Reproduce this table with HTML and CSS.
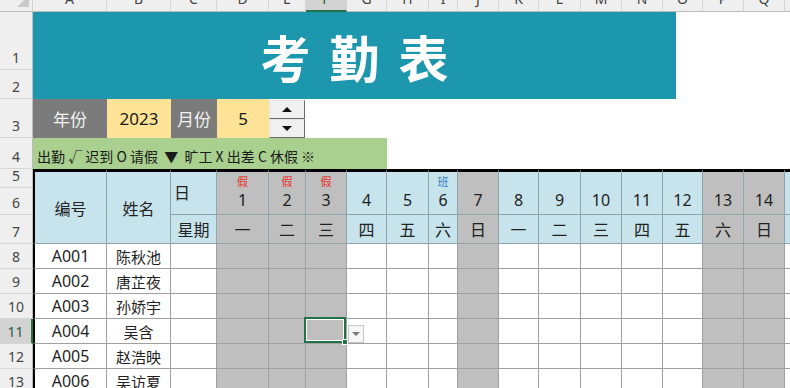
FILE: index.html
```html
<!DOCTYPE html>
<html lang="zh">
<head>
<meta charset="utf-8">
<title>考勤表</title>
<link rel="stylesheet" href="styles.css">
</head>
<body>
<div class="sheet">
  <div class="corner"></div>
  <div class="ch">A</div><div class="ch">B</div><div class="ch">C</div><div class="ch">D</div><div class="ch">E</div><div class="ch sel">F</div><div class="ch">G</div><div class="ch">H</div><div class="ch">I</div><div class="ch">J</div><div class="ch">K</div><div class="ch">L</div><div class="ch">M</div><div class="ch">N</div><div class="ch">O</div><div class="ch">P</div><div class="ch">Q</div><div class="ch">R</div>

  <div class="rh">1</div>
  <div class="title">考勤表</div>
  <div class="blank blank-top"></div>
  <div class="rh">2</div>

  <div class="rh">3</div>
  <div class="lab">年份</div>
  <div class="val">2023</div>
  <div class="lab">月份</div>
  <div class="val">5</div>
  <div class="spin"><div class="spin-btn"><span class="tri-up"></span></div><div class="spin-btn"><span class="tri-down"></span></div></div>
  <div class="blank blank-r3"></div>

  <div class="rh">4</div>
  <div class="legend">出勤 √ 迟到 O 请假  ▼  旷工 X 出差 C 休假 ※</div>
  <div class="blank blank-r4"></div>

  <div class="rh">5</div>
  <div class="th top first hd">编号</div>
  <div class="th top hd">姓名</div>
  <div class="th top ri">日</div>
  <div class="th top day off"><span class="tag">假</span><span class="num">1</span></div>
  <div class="th top day off"><span class="tag">假</span><span class="num">2</span></div>
  <div class="th top day off"><span class="tag">假</span><span class="num">3</span></div>
  <div class="th top day"><span class="num">4</span></div>
  <div class="th top day"><span class="num">5</span></div>
  <div class="th top day"><span class="tag work">班</span><span class="num">6</span></div>
  <div class="th top day off"><span class="num">7</span></div>
  <div class="th top day"><span class="num">8</span></div>
  <div class="th top day"><span class="num">9</span></div>
  <div class="th top day"><span class="num">10</span></div>
  <div class="th top day"><span class="num">11</span></div>
  <div class="th top day"><span class="num">12</span></div>
  <div class="th top day off"><span class="num">13</span></div>
  <div class="th top day off"><span class="num">14</span></div>
  <div class="th top day"><span class="num">15</span></div>
  <div class="rh">6</div>
  <div class="rh">7</div>
  <div class="th wkl">星期</div>
  <div class="th wk off">一</div><div class="th wk off">二</div><div class="th wk off">三</div><div class="th wk">四</div><div class="th wk">五</div><div class="th wk">六</div><div class="th wk off">日</div><div class="th wk">一</div><div class="th wk">二</div><div class="th wk">三</div><div class="th wk">四</div><div class="th wk">五</div><div class="th wk off">六</div><div class="th wk off">日</div><div class="th wk">一</div>

  <div class="rh">8</div>
  <div class="td first">A001</div><div class="td name">陈秋池</div><div class="td"></div>
  <div class="td off"></div><div class="td off"></div><div class="td off"></div><div class="td"></div><div class="td"></div><div class="td"></div><div class="td off"></div><div class="td"></div><div class="td"></div><div class="td"></div><div class="td"></div><div class="td"></div><div class="td off"></div><div class="td off"></div><div class="td"></div>

  <div class="rh">9</div>
  <div class="td first">A002</div><div class="td name">唐芷夜</div><div class="td"></div>
  <div class="td off"></div><div class="td off"></div><div class="td off"></div><div class="td"></div><div class="td"></div><div class="td"></div><div class="td off"></div><div class="td"></div><div class="td"></div><div class="td"></div><div class="td"></div><div class="td"></div><div class="td off"></div><div class="td off"></div><div class="td"></div>

  <div class="rh">10</div>
  <div class="td first">A003</div><div class="td name">孙娇宇</div><div class="td"></div>
  <div class="td off"></div><div class="td off"></div><div class="td off"></div><div class="td"></div><div class="td"></div><div class="td"></div><div class="td off"></div><div class="td"></div><div class="td"></div><div class="td"></div><div class="td"></div><div class="td"></div><div class="td off"></div><div class="td off"></div><div class="td"></div>

  <div class="rh sel">11</div>
  <div class="td first">A004</div><div class="td name">吴含</div><div class="td"></div>
  <div class="td off"></div><div class="td off"></div><div class="td off cur"><div class="selbox"><span class="handle"></span></div><div class="dd"><span class="dd-tri"></span></div></div><div class="td"></div><div class="td"></div><div class="td"></div><div class="td off"></div><div class="td"></div><div class="td"></div><div class="td"></div><div class="td"></div><div class="td"></div><div class="td off"></div><div class="td off"></div><div class="td"></div>

  <div class="rh">12</div>
  <div class="td first">A005</div><div class="td name">赵浩映</div><div class="td"></div>
  <div class="td off"></div><div class="td off"></div><div class="td off"></div><div class="td"></div><div class="td"></div><div class="td"></div><div class="td off"></div><div class="td"></div><div class="td"></div><div class="td"></div><div class="td"></div><div class="td"></div><div class="td off"></div><div class="td off"></div><div class="td"></div>

  <div class="rh">13</div>
  <div class="td first">A006</div><div class="td name">吴访夏</div><div class="td"></div>
  <div class="td off"></div><div class="td off"></div><div class="td off"></div><div class="td"></div><div class="td"></div><div class="td"></div><div class="td off"></div><div class="td"></div><div class="td"></div><div class="td"></div><div class="td"></div><div class="td"></div><div class="td off"></div><div class="td off"></div><div class="td"></div>
</div>
</body>
</html>
```

FILE: styles.css
```css
* { box-sizing: border-box; margin: 0; padding: 0; }
html, body { width: 790px; height: 388px; overflow: hidden; background: #fff; }
body { font-family: "Noto Sans", "Noto Sans CJK SC", sans-serif; color: #1f1f1f; }

.sheet {
  display: grid;
  width: 826px;
  grid-template-columns: 33px 74px 64px 46px 52px 37px 41px 40px 42px 29px 41px 40px 42px 41px 41px 40px 41px 41px 41px;
  grid-template-rows: 12px 58px 29px 39px 31px 19px 27px 29px repeat(6, 25px);
}
.sheet > div { overflow: hidden; min-width: 0; }

.corner {
  position: relative;
  background: #efefef;
  border-right: 1px solid #cfcfcf;
  border-bottom: 1px solid #bdbdbd;
}
.corner::after {
  content: "";
  position: absolute;
  right: 3px;
  bottom: 4px;
  border-left: 12px solid transparent;
  border-bottom: 12px solid #c9c9c9;
}

.ch {
  display: flex;
  align-items: flex-end;
  justify-content: center;
  background: #efefef;
  border-right: 1px solid #d5d5d5;
  border-bottom: 1px solid #bdbdbd;
  padding-bottom: 5px;
  font-size: 14px;
  line-height: 14px;
  color: #444;
}
.ch.sel { background: #d3d3d3; border-bottom: 2px solid #217346; padding-bottom: 4px; color: #1e5e3a; }

.rh {
  display: flex;
  align-items: flex-end;
  justify-content: center;
  background: #efefef;
  border-right: 1px solid #bdbdbd;
  border-bottom: 1px solid #d5d5d5;
  padding-bottom: 4px;
  font-size: 14px;
  line-height: 14px;
  color: #444;
}
.rh.sel { background: #d3d3d3; border-right: 2px solid #217346; color: #1e5e3a; }

.title {
  grid-column: span 15;
  grid-row: span 2;
  margin-right: 27px;
  display: flex;
  align-items: center;
  justify-content: center;
  background: #1c97ae;
  color: #fff;
  font-family: "Noto Sans CJK SC", sans-serif;
  font-weight: 700;
  font-size: 50px;
  letter-spacing: 19px;
  padding-left: 19px;
}

.blank-top { grid-column: span 3; grid-row: span 2; }
.blank-r3 { grid-column: span 13; }
.blank-r4 { grid-column: span 11; }

.lab, .val {
  display: flex;
  align-items: center;
  justify-content: center;
  font-size: 17px;
}
.lab { background: #7b7b7b; color: #f2f2f2; font-family: "Noto Sans CJK SC", sans-serif; }
.val { background: #fee397; color: #1a1a1a; }

.spin {
  display: flex;
  flex-direction: column;
  padding: 1px 1px 0 0;
}
.spin-btn {
  flex: 1;
  display: flex;
  align-items: center;
  justify-content: center;
  background: #f0f0f0;
  border: 1px solid;
  border-color: #e6e6e6 #6b6b6b #6b6b6b #e6e6e6;
}
.tri-up { border-left: 5px solid transparent; border-right: 5px solid transparent; border-bottom: 5px solid #111; }
.tri-down { border-left: 5px solid transparent; border-right: 5px solid transparent; border-top: 5px solid #111; }

.legend {
  grid-column: span 7;
  display: flex;
  align-items: center;
  background: #a9d08e;
  padding: 4px 0 0 4px;
  font-family: "Noto Sans CJK SC", sans-serif;
  font-size: 14px;
  white-space: pre;
  color: #1a1a1a;
}

.th {
  display: flex;
  align-items: center;
  justify-content: center;
  background: #c7e4ed;
  border-right: 1px solid #91a4aa;
  border-bottom: 1px solid #91a4aa;
  font-family: "Noto Sans CJK SC", sans-serif;
  font-size: 16px;
  color: #222;
}
.th.off, .td.off { background: #bfbfbf; }
.top { border-top: 3px solid #000; }
.first { border-left: 2px solid #000; }
.hd { grid-row: span 3; }
.ri { grid-row: span 2; justify-content: flex-start; padding: 0 0 3px 3px; }
.day {
  grid-row: span 2;
  flex-direction: column;
  justify-content: flex-end;
  padding-bottom: 4px;
}
.tag { font-size: 11px; line-height: 13px; margin-bottom: 2px; color: #e8302a; }
.tag.work { color: #2f80c8; }
.num { font-family: "Noto Sans", sans-serif; font-size: 16px; line-height: 20px; }
.wk { font-size: 16px; }

.td {
  display: flex;
  align-items: center;
  justify-content: center;
  border-right: 1px solid #a0a0a0;
  border-bottom: 1px solid #a0a0a0;
  font-size: 16px;
  color: #1f1f1f;
}
.name { font-family: "Noto Sans CJK SC", sans-serif; font-size: 15px; }

.sheet > .cur { position: relative; overflow: visible; z-index: 2; }
.selbox {
  position: absolute;
  left: -2px;
  top: -2px;
  right: 0;
  bottom: 0;
  border: 2px solid #217346;
  box-shadow: inset 0 0 0 1px #fff;
}
.handle {
  position: absolute;
  right: -4px;
  bottom: -4px;
  width: 6px;
  height: 6px;
  background: #217346;
  border: 1px solid #fff;
}
.dd {
  position: absolute;
  left: calc(100% + 2px);
  top: 6px;
  width: 16px;
  height: 18px;
  display: flex;
  align-items: center;
  justify-content: center;
  background: #f6f6f6;
  border: 1px solid #c6c6c6;
}
.dd-tri { border-left: 4px solid transparent; border-right: 4px solid transparent; border-top: 4px solid #777; }
```
